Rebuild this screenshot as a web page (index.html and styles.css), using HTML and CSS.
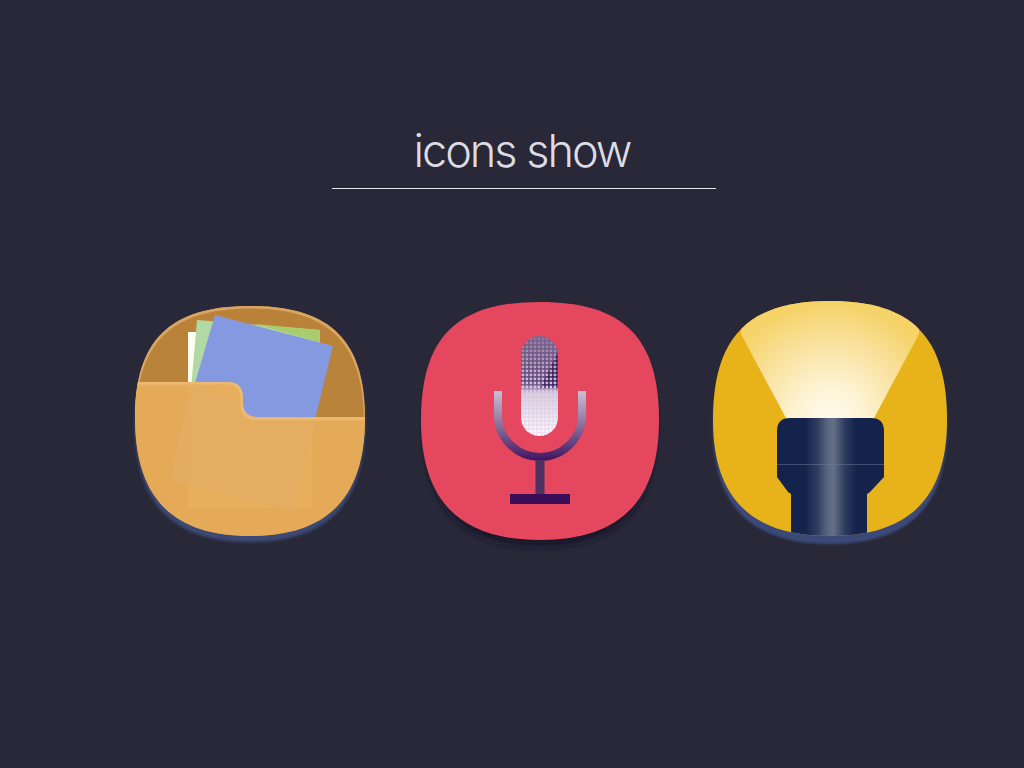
FILE: index.html
```html
<!DOCTYPE html>
<html lang="en">
<head>
   <meta charset="UTF-8">
   <title>icons show</title>
   <link rel="stylesheet" href="styles.css">
</head>
<body>
   <div class="page">
      <header class="heading">
         <h1 class="heading-title">icons show</h1>
      </header>

      <div class="icon-row">
         <!-- folder -->
         <svg class="icon icon-folder" viewBox="0 0 260 265" width="260" height="265">
            <defs>
               <clipPath id="folderShape">
                  <path d="M130 16C210 16 245 50 245 128C245 207 208 246 130 246C52 246 15 207 15 128C15 50 50 16 130 16Z"/>
               </clipPath>
               <clipPath id="folderFront">
                  <path d="M15 92H108Q123 92 123 108V113Q123 127 138 127H245V250H15Z"/>
               </clipPath>
               <linearGradient id="folderBack" x1="0" y1="0" x2="0" y2="1">
                  <stop offset="0" stop-color="#ba8238"/>
                  <stop offset="1" stop-color="#b8843f"/>
               </linearGradient>
               <filter id="soft" x="-10%" y="-10%" width="120%" height="120%">
                  <feGaussianBlur stdDeviation="1.6"/>
               </filter>
               <filter id="glow" x="-5%" y="-5%" width="110%" height="110%">
                  <feGaussianBlur stdDeviation="1"/>
               </filter>
            </defs>
            <path d="M130 22C210 22 245 56 245 134C245 213 208 252 130 252C52 252 15 213 15 134C15 56 50 22 130 22Z" fill="#3c4a74" filter="url(#soft)"/>
            <path d="M130 16C210 16 245 50 245 128C245 207 208 246 130 246C52 246 15 207 15 128C15 50 50 16 130 16Z" fill="url(#folderBack)"/>
            <path d="M130 16C210 16 245 50 245 128H244C243 53 208 18.500 130 18.500C52 18.500 17 53 16 128H15C15 50 50 16 130 16Z" fill="#d8a662"/>
            <g clip-path="url(#folderShape)">
               <rect x="68" y="42" width="124" height="60" fill="#fffdf2"/>
               <path d="M77 30L200 40L199 110H70Z" fill="#b1d9a3"/>
               <path d="M135 34L200 40L199 52Z" fill="#a9cd6c"/>
               <path d="M95 25L213 56L190 150L70 110Z" fill="#8599e0"/>
               <path d="M15 92H108Q123 92 123 108V113Q123 127 138 127H245V250H15Z" fill="#e5aa58"/>
               <g clip-path="url(#folderFront)">
                  <rect x="68" y="96" width="124" height="122" fill="#ecb865" opacity="0.35"/>
                  <path d="M70 96L197 132L172 222L50 190Z" fill="#e4ad67" opacity="0.55"/>
                  <path d="M15 93H108Q122 93 122 108V113Q122 128.500 138 128.500H245" fill="none" stroke="#f0c07f" stroke-width="2.500" filter="url(#glow)"/>
               </g>
            </g>
         </svg>

         <!-- microphone -->
         <svg class="icon icon-mic" viewBox="0 0 260 265" width="260" height="265">
            <defs>
               <linearGradient id="micStand" gradientUnits="userSpaceOnUse" x1="0" y1="101" x2="0" y2="172">
                  <stop offset="0" stop-color="#cdbfd6"/>
                  <stop offset="0.45" stop-color="#8f769f"/>
                  <stop offset="1" stop-color="#3e0f5e"/>
               </linearGradient>
               <linearGradient id="micHead" x1="0" y1="0" x2="0" y2="1">
                  <stop offset="0" stop-color="#7e6390"/>
                  <stop offset="0.47" stop-color="#5c3f78"/>
                  <stop offset="0.57" stop-color="#d9c6e0"/>
                  <stop offset="1" stop-color="#eee2f3"/>
               </linearGradient>
               <linearGradient id="micDots" gradientUnits="userSpaceOnUse" x1="0" y1="46" x2="0" y2="146">
                  <stop offset="0" stop-color="#8a7696"/>
                  <stop offset="0.48" stop-color="#cfc6d8"/>
                  <stop offset="1" stop-color="#ffffff"/>
               </linearGradient>
               <pattern id="dotGrid" patternUnits="userSpaceOnUse" x="111" y="47" width="4" height="4">
                  <rect x="0.6" y="0.6" width="2.6" height="2.6" fill="#ffffff"/>
               </pattern>
               <mask id="dotMask">
                  <rect x="100" y="40" width="60" height="110" fill="url(#dotGrid)"/>
               </mask>
               <clipPath id="micCapsule">
                  <rect x="111" y="46" width="37" height="100" rx="18.5"/>
               </clipPath>
               <filter id="micShadow" x="-10%" y="-10%" width="120%" height="120%">
                  <feGaussianBlur stdDeviation="3.500"/>
               </filter>
            </defs>
            <path d="M130 18C210 18 245 53 245 136C245 216 209 256 130 256C51 256 15 216 15 136C15 53 50 18 130 18Z" fill="#15122a" filter="url(#micShadow)"/>
            <path d="M130 12C213 12 249 47 249 130C249 210 211 250 130 250C49 250 11 210 11 130C11 47 47 12 130 12Z" fill="#e4475e"/>
            <rect x="111" y="46" width="37" height="100" rx="18.5" fill="url(#micHead)"/>
            <path d="M149 60L130 98H149Z" fill="#2f0f52" opacity="0.8" clip-path="url(#micCapsule)"/>
            <rect x="111" y="46" width="37" height="100" rx="18.5" fill="url(#micDots)" mask="url(#dotMask)"/>
            <path d="M88 101V125A42 42 0 0 0 172 125V101" fill="none" stroke="url(#micStand)" stroke-width="8"/>
            <rect x="125.5" y="170" width="9" height="34" fill="#4f3063"/>
            <rect x="100" y="204" width="60" height="10" fill="#3c0e58"/>
         </svg>

         <!-- flashlight -->
         <svg class="icon icon-flash" viewBox="0 0 260 265" width="260" height="265">
            <defs>
               <clipPath id="flashShape">
                  <path d="M130 11C212 11 247 47 247 130C247 207 210 246 130 246C50 246 13 207 13 130C13 47 48 11 130 11Z"/>
               </clipPath>
               <radialGradient id="flashBeam" gradientUnits="userSpaceOnUse" cx="130" cy="128" r="115">
                  <stop offset="0" stop-color="#fffaee"/>
                  <stop offset="0.3" stop-color="#fdf3d2"/>
                  <stop offset="0.7" stop-color="#f9e099"/>
                  <stop offset="1" stop-color="#f5d368"/>
               </radialGradient>
               <linearGradient id="flashBody" x1="0" y1="0" x2="1" y2="0">
                  <stop offset="0.26" stop-color="#14234c"/>
                  <stop offset="0.38" stop-color="#2f3d60"/>
                  <stop offset="0.47" stop-color="#5a6680"/>
                  <stop offset="0.53" stop-color="#657086"/>
                  <stop offset="0.63" stop-color="#2f3d60"/>
                  <stop offset="0.74" stop-color="#14234c"/>
               </linearGradient>
               <filter id="flashSoft" x="-10%" y="-10%" width="120%" height="120%">
                  <feGaussianBlur stdDeviation="1"/>
               </filter>
            </defs>
            <path d="M130 20C212 20 247 55 247 138C247 215 210 254 130 254C50 254 13 215 13 138C13 55 48 20 130 20Z" fill="#3b4a78" filter="url(#flashSoft)"/>
            <path d="M130 11C212 11 247 47 247 130C247 207 210 246 130 246C50 246 13 207 13 130C13 47 48 11 130 11Z" fill="#e8b21a"/>
            <g clip-path="url(#flashShape)">
               <path d="M41 44L41 0H219V44L173 130H87Z" fill="url(#flashBeam)"/>
               <path d="M90 128H171Q184 128 184 141V187L170 202L167 204V250H91V204L88 202L77 187V141Q77 128 90 128Z" fill="url(#flashBody)"/>
               <rect x="77" y="174" width="107" height="1" fill="#6d7a95" opacity="0.5"/>
            </g>
         </svg>
      </div>
   </div>
</body>
</html>
```

FILE: styles.css
```css
*{
   box-sizing: border-box;
   margin: 0;
   padding: 0;
}

html, body{
   height: 100%;
}

body{
   background: #282838;
   font-family: "Inter", "Liberation Sans", sans-serif;
}

.page{
   width: 1024px;
   height: 768px;
   overflow: hidden;
   padding-top: 120px;
}

.heading{
   width: 384px;
   height: 69px;
   margin-left: 332px;
   padding-right: 4px;
   border-bottom: 1px solid #e8e6ea;
   text-align: center;
}

.heading-title{
   font-size: 45px;
   font-weight: 300;
   line-height: 62px;
   letter-spacing: -2px;
   color: #dddce2;
}

.icon-row{
   display: flex;
   padding: 101px 0 0 120px;
   gap: 30px;
}

.icon{
   display: block;
   flex: none;
}
```
